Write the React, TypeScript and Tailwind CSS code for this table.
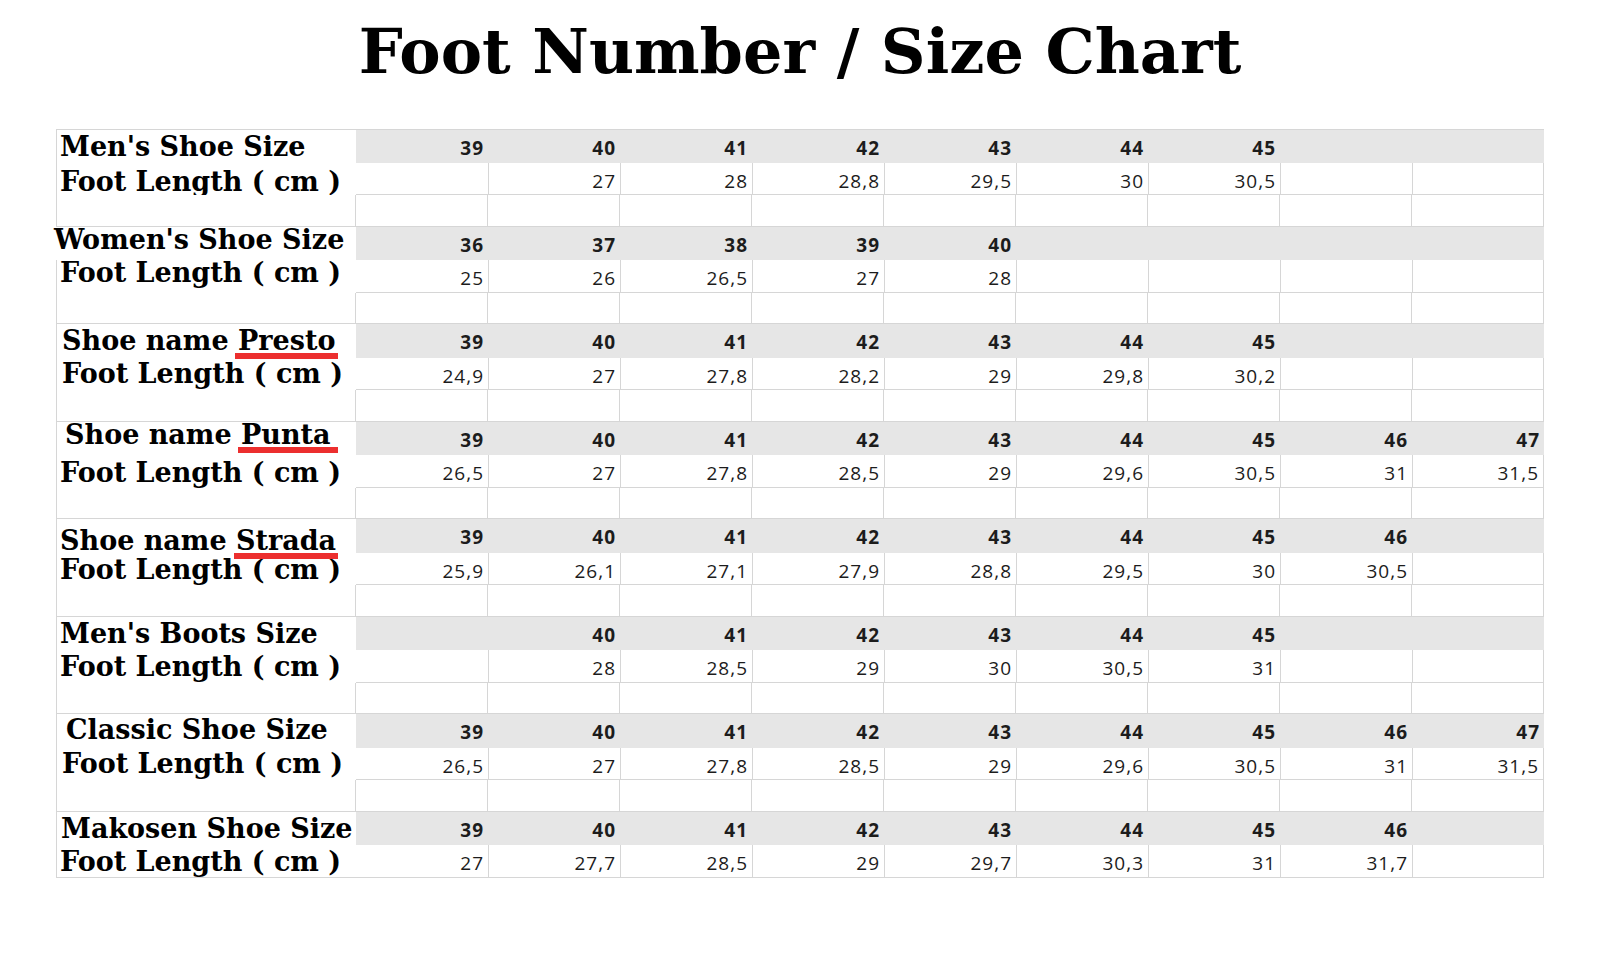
import React from "react";

type Group = {
  label: string;
  mark?: string; // underlined shoe name
  markFix?: string; // bar ends tweak
  labelPad: string; // left offset of the label
  labelTop: string; // nudge down of the label baseline
  footPad: string;
  footTop: string;
  sizes: string[];
  lengths: string[];
  last?: boolean;
};

const groups: Group[] = [
  {
    label: "Men's Shoe Size",
    labelPad: "pl-[3px]",
    labelTop: "pt-[5px]",
    footPad: "pl-[3px]",
    footTop: "pt-[7px]",
    sizes: ["39", "40", "41", "42", "43", "44", "45", "", ""],
    lengths: ["", "27", "28", "28,8", "29,5", "30", "30,5", "", ""],
  },
  {
    label: "Women's Shoe Size",
    labelPad: "pl-0 -ml-[3px]",
    labelTop: "pt-[1px]",
    footPad: "pl-[3px]",
    footTop: "pt-[1px]",
    sizes: ["36", "37", "38", "39", "40", "", "", "", ""],
    lengths: ["25", "26", "26,5", "27", "28", "", "", "", ""],
  },
  {
    label: "Shoe name ",
    mark: "Presto",
    markFix: "left-[-3px] right-[-3px]",
    labelPad: "pl-[5px]",
    labelTop: "pt-[5px]",
    footPad: "pl-[5px]",
    footTop: "pt-[4px]",
    sizes: ["39", "40", "41", "42", "43", "44", "45", "", ""],
    lengths: ["24,9", "27", "27,8", "28,2", "29", "29,8", "30,2", "", ""],
  },
  {
    label: "Shoe name ",
    mark: "Punta",
    markFix: "left-[-3px] right-[-7px]",
    labelPad: "pl-[8px]",
    labelTop: "pt-[1px]",
    footPad: "pl-[3px]",
    footTop: "pt-[6px]",
    sizes: ["39", "40", "41", "42", "43", "44", "45", "46", "47"],
    lengths: ["26,5", "27", "27,8", "28,5", "29", "29,6", "30,5", "31", "31,5"],
  },
  {
    label: "Shoe name ",
    mark: "Strada",
    markFix: "left-[-2px] right-[-2px]",
    labelPad: "pl-[3px]",
    labelTop: "pt-[10px]",
    footPad: "pl-[3px]",
    footTop: "pt-[5px]",
    sizes: ["39", "40", "41", "42", "43", "44", "45", "46", ""],
    lengths: ["25,9", "26,1", "27,1", "27,9", "28,8", "29,5", "30", "30,5", ""],
  },
  {
    label: "Men's Boots Size",
    labelPad: "pl-[3px]",
    labelTop: "pt-[5px]",
    footPad: "pl-[3px]",
    footTop: "pt-[5px]",
    sizes: ["", "40", "41", "42", "43", "44", "45", "", ""],
    lengths: ["", "28", "28,5", "29", "30", "30,5", "31", "", ""],
  },
  {
    label: "Classic Shoe Size",
    labelPad: "pl-[9px]",
    labelTop: "pt-[4px]",
    footPad: "pl-[5px]",
    footTop: "pt-[4px]",
    sizes: ["39", "40", "41", "42", "43", "44", "45", "46", "47"],
    lengths: ["26,5", "27", "27,8", "28,5", "29", "29,6", "30,5", "31", "31,5"],
  },
  {
    label: "Makosen Shoe Size",
    labelPad: "pl-[4px]",
    labelTop: "pt-[5px]",
    footPad: "pl-[3px]",
    footTop: "pt-[5px]",
    sizes: ["39", "40", "41", "42", "43", "44", "45", "46", ""],
    lengths: ["27", "27,7", "28,5", "29", "29,7", "30,3", "31", "31,7", ""],
    last: true,
  },
];

const serif = "font-['DejaVu_Serif',serif] font-bold text-[27px] text-black";
const nums =
  "font-['Open_Sans',sans-serif] text-[19px] tracking-[1px] text-[#1c1c1c] text-right pr-[4px]";

function GroupRows({ g, first }: { g: Group; first: boolean }) {
  return (
    <>
      {/* size row */}
      <div
        className={`h-[33.5px] leading-[23px] whitespace-nowrap bg-white ${serif} ${g.labelPad} ${g.labelTop} ${
          first ? "border-t border-[#d6d6d6]" : ""
        }`}
      >
        {g.label}
        {g.mark ? (
          <span className="relative">
            {g.mark}
            <span
              className={`absolute bottom-[-3px] h-[6px] bg-[#ec2f2f] ${g.markFix}`}
            />
          </span>
        ) : null}
      </div>
      {g.sizes.map((s, i) => (
        <div
          key={"s" + i}
          className={`h-[33.5px] leading-[29.5px] pt-[4px] font-bold bg-[#e6e6e6] ${nums} ${
            first ? "border-t border-[#d6d6d6]" : ""
          }`}
        >
          {s}
        </div>
      ))}

      {/* foot length row */}
      <div
        className={`h-[32.5px] leading-[23px] whitespace-nowrap bg-white ${serif} ${g.footPad} ${g.footTop} ${
          g.last ? "border-b border-[#d6d6d6]" : ""
        }`}
      >
        Foot Length ( cm )
      </div>
      {g.lengths.map((v, i) => (
        <div
          key={"l" + i}
          className={`h-[32.5px] leading-[28.5px] pt-[4px] bg-white border-b border-[#d6d6d6] ${nums} ${
            i > 0 ? "border-l" : ""
          } ${i === 8 ? "border-r" : ""}`}
        >
          {v}
        </div>
      ))}

      {/* spacer row */}
      {!g.last ? (
        <>
          <div className="h-[31.5px] border-b border-r border-[#d6d6d6] bg-white" />
          {Array.from({ length: 9 }).map((_, i) => (
            <div
              key={"b" + i}
              className="h-[31.5px] border-b border-r border-[#d6d6d6] bg-white"
            />
          ))}
        </>
      ) : null}
    </>
  );
}

export default function App() {
  return (
    <div className="w-[1600px] h-[960px] bg-white overflow-hidden">
      <h1 className="pt-[21px] text-center font-['DejaVu_Serif',serif] font-bold text-[62px] leading-[62px] text-black">
        Foot Number / Size Chart
      </h1>

      <div className="ml-[56px] mt-[46px] w-[1487px] grid grid-cols-[299px_repeat(9,132px)] border-l border-[#d6d6d6]">
        {groups.map((g, i) => (
          <GroupRows key={i} g={g} first={i === 0} />
        ))}
      </div>
    </div>
  );
}
